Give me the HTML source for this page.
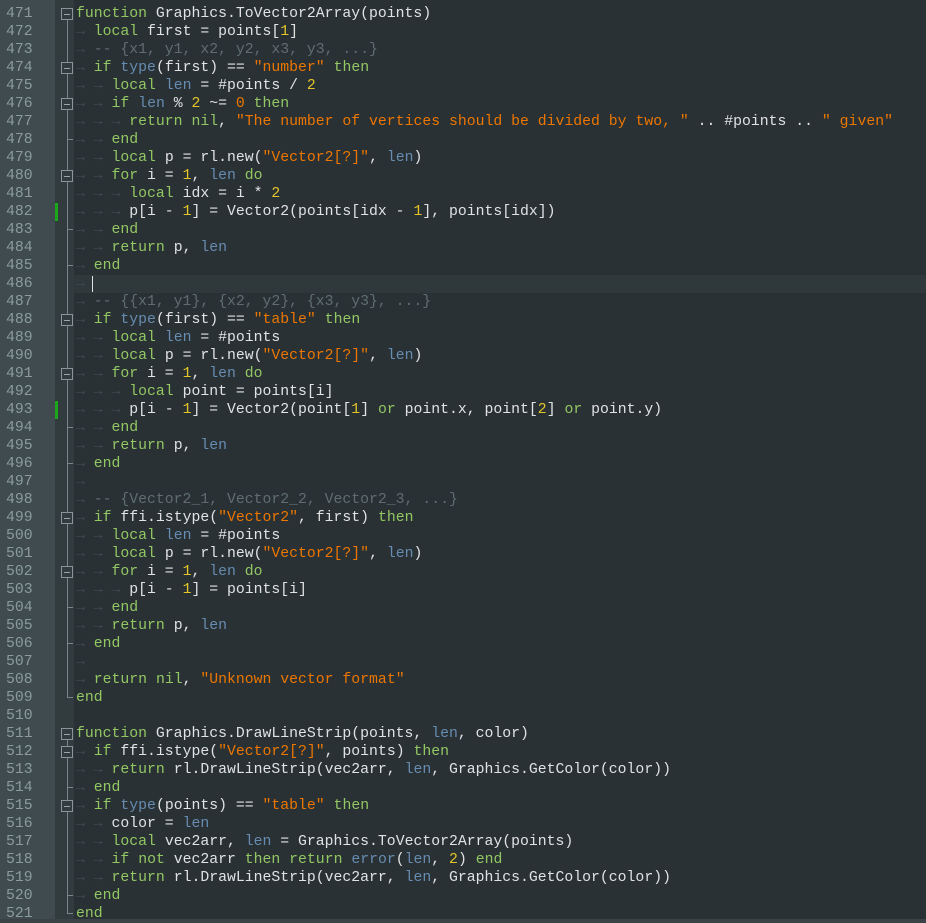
<!DOCTYPE html>
<html><head><meta charset="utf-8"><style>
html,body{margin:0;padding:0;}
body{width:926px;height:923px;background:#293134;position:relative;overflow:hidden;font-family:"Liberation Mono",monospace;}
#ln{position:absolute;left:0;top:0;width:55px;height:923px;background:#3f4b4e;}
#fm{position:absolute;left:55px;top:0;width:19px;height:923px;background:#323c3f;}
.cur{position:absolute;left:74px;top:275px;width:852px;height:18px;background:#2f393c;}
.row{position:absolute;left:0;height:18px;line-height:18px;width:926px;white-space:pre;font-size:14.8px;}
.num{position:absolute;left:6px;width:40px;color:#8a9b9f;font-size:14.8px;}
.code{position:absolute;left:76px;color:#e0e2e4;}
.k{color:#93c763}.s{color:#ec7600}.n{color:#e3c52a}.c{color:#5f6d73}.b{color:#678cb1}.t{color:#3f4c52;}
.box{position:absolute;left:61px;width:10px;height:10px;border:1px solid #8a9599;background:#323c3f;}
.box:after{content:"";position:absolute;left:2px;top:5px;width:6px;height:1px;background:#9aa5a9;}
.vl{position:absolute;left:67px;width:1px;background:#78868a;}
.tk{position:absolute;left:67px;width:6px;height:1px;background:#78868a;}
.chg{position:absolute;left:55px;width:3px;height:18px;background:#1aa81a;}
</style></head><body>
<div id="ln"></div><div id="fm"></div><div class="cur"></div>
<div style="position:absolute;left:92px;top:276px;width:1px;height:16px;background:#e0e2e4"></div>
<div style="position:absolute;left:0;top:919px;width:926px;height:4px;background:#3a4245"></div>
<div class="vl" style="top:19px;height:678px"></div>
<div class="tk" style="top:697px"></div>
<div class="vl" style="top:739px;height:174px"></div>
<div class="tk" style="top:913px"></div>
<div class="tk" style="top:139px"></div><div class="tk" style="top:229px"></div><div class="tk" style="top:265px"></div>
<div class="tk" style="top:427px"></div><div class="tk" style="top:463px"></div>
<div class="tk" style="top:607px"></div><div class="tk" style="top:643px"></div>
<div class="tk" style="top:787px"></div><div class="tk" style="top:895px"></div>
<div class="box" style="top:8px"></div><div class="box" style="top:62px"></div><div class="box" style="top:98px"></div>
<div class="box" style="top:170px"></div><div class="box" style="top:314px"></div><div class="box" style="top:368px"></div>
<div class="box" style="top:512px"></div><div class="box" style="top:566px"></div><div class="box" style="top:728px"></div>
<div class="box" style="top:746px"></div><div class="box" style="top:800px"></div>
<div class="chg" style="top:203px"></div><div class="chg" style="top:401px"></div>

<div class="row" style="top:5px"><span class="num">471</span><span class="code"><span class="k">function</span> Graphics.ToVector2Array(points)</span></div>
<div class="row" style="top:23px"><span class="num">472</span><span class="code"><span class="t">→ </span><span class="k">local</span> first = points[<span class="n">1</span>]</span></div>
<div class="row" style="top:41px"><span class="num">473</span><span class="code"><span class="t">→ </span><span class="c">-- {x1, y1, x2, y2, x3, y3, ...}</span></span></div>
<div class="row" style="top:59px"><span class="num">474</span><span class="code"><span class="t">→ </span><span class="k">if</span> <span class="b">type</span>(first) == <span class="s">"number"</span> <span class="k">then</span></span></div>
<div class="row" style="top:77px"><span class="num">475</span><span class="code"><span class="t">→ → </span><span class="k">local</span> <span class="b">len</span> = #points / <span class="n">2</span></span></div>
<div class="row" style="top:95px"><span class="num">476</span><span class="code"><span class="t">→ → </span><span class="k">if</span> <span class="b">len</span> % <span class="n">2</span> ~= <span class="s">0</span> <span class="k">then</span></span></div>
<div class="row" style="top:113px"><span class="num">477</span><span class="code"><span class="t">→ → → </span><span class="k">return</span> <span class="k">nil</span>, <span class="s">"The number of vertices should be divided by two, "</span> .. #points .. <span class="s">" given"</span></span></div>
<div class="row" style="top:131px"><span class="num">478</span><span class="code"><span class="t">→ → </span><span class="k">end</span></span></div>
<div class="row" style="top:149px"><span class="num">479</span><span class="code"><span class="t">→ → </span><span class="k">local</span> p = rl.new(<span class="s">"Vector2[?]"</span>, <span class="b">len</span>)</span></div>
<div class="row" style="top:167px"><span class="num">480</span><span class="code"><span class="t">→ → </span><span class="k">for</span> i = <span class="n">1</span>, <span class="b">len</span> <span class="k">do</span></span></div>
<div class="row" style="top:185px"><span class="num">481</span><span class="code"><span class="t">→ → → </span><span class="k">local</span> idx = i * <span class="n">2</span></span></div>
<div class="row" style="top:203px"><span class="num">482</span><span class="code"><span class="t">→ → → </span>p[i - <span class="n">1</span>] = Vector2(points[idx - <span class="n">1</span>], points[idx])</span></div>
<div class="row" style="top:221px"><span class="num">483</span><span class="code"><span class="t">→ → </span><span class="k">end</span></span></div>
<div class="row" style="top:239px"><span class="num">484</span><span class="code"><span class="t">→ → </span><span class="k">return</span> p, <span class="b">len</span></span></div>
<div class="row" style="top:257px"><span class="num">485</span><span class="code"><span class="t">→ </span><span class="k">end</span></span></div>
<div class="row" style="top:275px"><span class="num">486</span><span class="code"><span class="t">→ </span></span></div>
<div class="row" style="top:293px"><span class="num">487</span><span class="code"><span class="t">→ </span><span class="c">-- {{x1, y1}, {x2, y2}, {x3, y3}, ...}</span></span></div>
<div class="row" style="top:311px"><span class="num">488</span><span class="code"><span class="t">→ </span><span class="k">if</span> <span class="b">type</span>(first) == <span class="s">"table"</span> <span class="k">then</span></span></div>
<div class="row" style="top:329px"><span class="num">489</span><span class="code"><span class="t">→ → </span><span class="k">local</span> <span class="b">len</span> = #points</span></div>
<div class="row" style="top:347px"><span class="num">490</span><span class="code"><span class="t">→ → </span><span class="k">local</span> p = rl.new(<span class="s">"Vector2[?]"</span>, <span class="b">len</span>)</span></div>
<div class="row" style="top:365px"><span class="num">491</span><span class="code"><span class="t">→ → </span><span class="k">for</span> i = <span class="n">1</span>, <span class="b">len</span> <span class="k">do</span></span></div>
<div class="row" style="top:383px"><span class="num">492</span><span class="code"><span class="t">→ → → </span><span class="k">local</span> point = points[i]</span></div>
<div class="row" style="top:401px"><span class="num">493</span><span class="code"><span class="t">→ → → </span>p[i - <span class="n">1</span>] = Vector2(point[<span class="n">1</span>] <span class="k">or</span> point.x, point[<span class="n">2</span>] <span class="k">or</span> point.y)</span></div>
<div class="row" style="top:419px"><span class="num">494</span><span class="code"><span class="t">→ → </span><span class="k">end</span></span></div>
<div class="row" style="top:437px"><span class="num">495</span><span class="code"><span class="t">→ → </span><span class="k">return</span> p, <span class="b">len</span></span></div>
<div class="row" style="top:455px"><span class="num">496</span><span class="code"><span class="t">→ </span><span class="k">end</span></span></div>
<div class="row" style="top:473px"><span class="num">497</span><span class="code"><span class="t">→ </span></span></div>
<div class="row" style="top:491px"><span class="num">498</span><span class="code"><span class="t">→ </span><span class="c">-- {Vector2_1, Vector2_2, Vector2_3, ...}</span></span></div>
<div class="row" style="top:509px"><span class="num">499</span><span class="code"><span class="t">→ </span><span class="k">if</span> ffi.istype(<span class="s">"Vector2"</span>, first) <span class="k">then</span></span></div>
<div class="row" style="top:527px"><span class="num">500</span><span class="code"><span class="t">→ → </span><span class="k">local</span> <span class="b">len</span> = #points</span></div>
<div class="row" style="top:545px"><span class="num">501</span><span class="code"><span class="t">→ → </span><span class="k">local</span> p = rl.new(<span class="s">"Vector2[?]"</span>, <span class="b">len</span>)</span></div>
<div class="row" style="top:563px"><span class="num">502</span><span class="code"><span class="t">→ → </span><span class="k">for</span> i = <span class="n">1</span>, <span class="b">len</span> <span class="k">do</span></span></div>
<div class="row" style="top:581px"><span class="num">503</span><span class="code"><span class="t">→ → → </span>p[i - <span class="n">1</span>] = points[i]</span></div>
<div class="row" style="top:599px"><span class="num">504</span><span class="code"><span class="t">→ → </span><span class="k">end</span></span></div>
<div class="row" style="top:617px"><span class="num">505</span><span class="code"><span class="t">→ → </span><span class="k">return</span> p, <span class="b">len</span></span></div>
<div class="row" style="top:635px"><span class="num">506</span><span class="code"><span class="t">→ </span><span class="k">end</span></span></div>
<div class="row" style="top:653px"><span class="num">507</span><span class="code"><span class="t">→ </span></span></div>
<div class="row" style="top:671px"><span class="num">508</span><span class="code"><span class="t">→ </span><span class="k">return</span> <span class="k">nil</span>, <span class="s">"Unknown vector format"</span></span></div>
<div class="row" style="top:689px"><span class="num">509</span><span class="code"><span class="k">end</span></span></div>
<div class="row" style="top:707px"><span class="num">510</span><span class="code"></span></div>
<div class="row" style="top:725px"><span class="num">511</span><span class="code"><span class="k">function</span> Graphics.DrawLineStrip(points, <span class="b">len</span>, color)</span></div>
<div class="row" style="top:743px"><span class="num">512</span><span class="code"><span class="t">→ </span><span class="k">if</span> ffi.istype(<span class="s">"Vector2[?]"</span>, points) <span class="k">then</span></span></div>
<div class="row" style="top:761px"><span class="num">513</span><span class="code"><span class="t">→ → </span><span class="k">return</span> rl.DrawLineStrip(vec2arr, <span class="b">len</span>, Graphics.GetColor(color))</span></div>
<div class="row" style="top:779px"><span class="num">514</span><span class="code"><span class="t">→ </span><span class="k">end</span></span></div>
<div class="row" style="top:797px"><span class="num">515</span><span class="code"><span class="t">→ </span><span class="k">if</span> <span class="b">type</span>(points) == <span class="s">"table"</span> <span class="k">then</span></span></div>
<div class="row" style="top:815px"><span class="num">516</span><span class="code"><span class="t">→ → </span>color = <span class="b">len</span></span></div>
<div class="row" style="top:833px"><span class="num">517</span><span class="code"><span class="t">→ → </span><span class="k">local</span> vec2arr, <span class="b">len</span> = Graphics.ToVector2Array(points)</span></div>
<div class="row" style="top:851px"><span class="num">518</span><span class="code"><span class="t">→ → </span><span class="k">if</span> <span class="k">not</span> vec2arr <span class="k">then</span> <span class="k">return</span> <span class="b">error</span>(<span class="b">len</span>, <span class="n">2</span>) <span class="k">end</span></span></div>
<div class="row" style="top:869px"><span class="num">519</span><span class="code"><span class="t">→ → </span><span class="k">return</span> rl.DrawLineStrip(vec2arr, <span class="b">len</span>, Graphics.GetColor(color))</span></div>
<div class="row" style="top:887px"><span class="num">520</span><span class="code"><span class="t">→ </span><span class="k">end</span></span></div>
<div class="row" style="top:905px"><span class="num">521</span><span class="code"><span class="k">end</span></span></div>
</body></html>
